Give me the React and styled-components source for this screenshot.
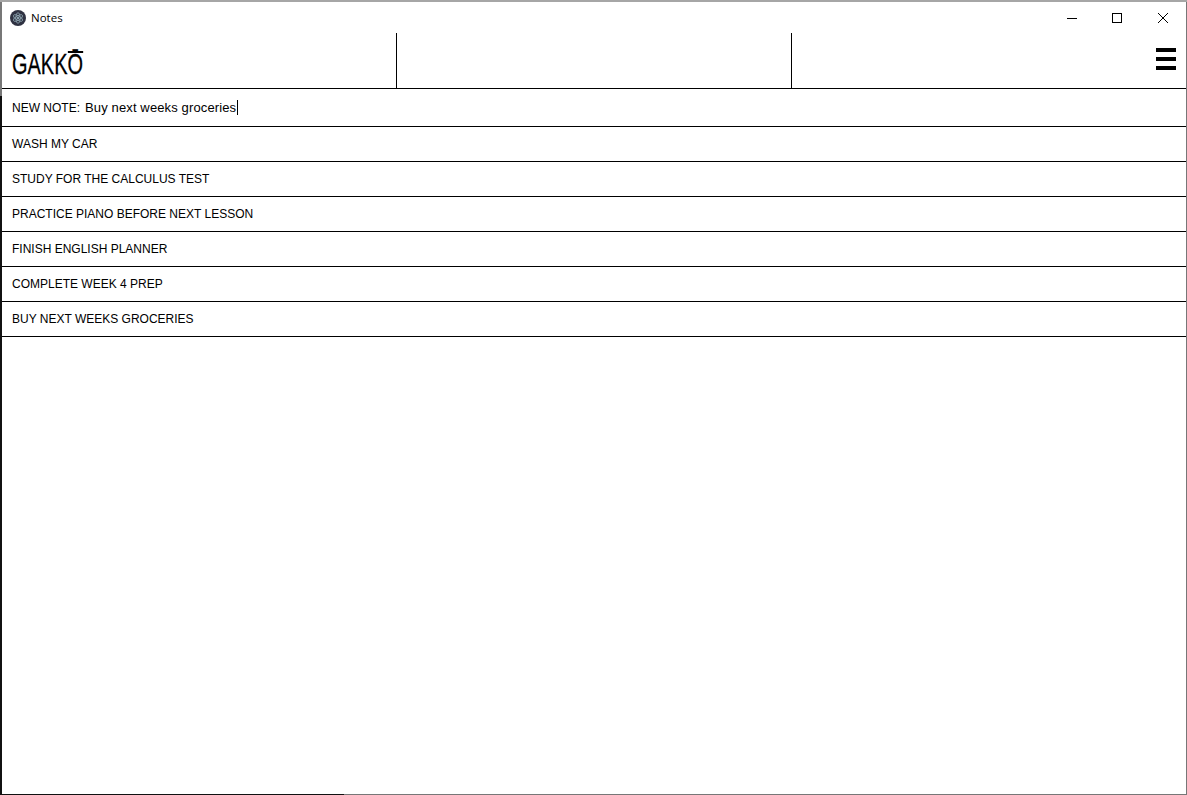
import React from "react";
import styled, { createGlobalStyle } from "styled-components";

const GlobalStyle = createGlobalStyle`
  html, body {
    margin: 0;
    padding: 0;
    background: #fff;
  }
  * {
    box-sizing: border-box;
  }
`;

// the window edge is gray, with darker parts where another window shows behind it
const Frame = styled.div`
  width: 1187px;
  height: 795px;
  padding: 2px 1px 1px 2px;
  background:
    linear-gradient(#a6a6a6, #a6a6a6) top left / 100% 2px no-repeat,
    linear-gradient(#111, #111) bottom left / 2px 699px no-repeat,
    linear-gradient(#111, #111) bottom left / 344px 1px no-repeat,
    #777;
`;

const Window = styled.div`
  height: 100%;
  display: flex;
  flex-direction: column;
  overflow: hidden;
  background: #fff;
  font-family: "Liberation Sans", Arial, sans-serif;
  color: #000;
`;

const TitleBar = styled.div`
  height: 31px;
  flex: none;
  display: flex;
  align-items: center;
  padding-left: 8px;
`;

const TitleText = styled.span`
  margin-left: 5px;
  font-family: "Open Sans", "Noto Sans", sans-serif;
  font-size: 11.5px;
  color: #000;
`;

const WindowControls = styled.div`
  margin-left: auto;
  margin-right: 1px;
  display: flex;
  height: 100%;
`;

const ControlButton = styled.div`
  width: 45px;
  display: flex;
  align-items: center;
  justify-content: center;

  &:last-child {
    margin-left: 1px;
  }
`;

const Header = styled.header`
  height: 56px;
  flex: none;
  display: grid;
  grid-template-columns: 395px 395px 1fr;
  border-bottom: 1px solid #000;
`;

const HeaderCell = styled.div`
  display: flex;
  align-items: flex-end;
  justify-content: ${(props) => (props.$end ? "flex-end" : "flex-start")};
  padding: ${(props) => (props.$end ? "0 10px 18px 0" : "0 0 8px 10px")};
  border-right: ${(props) => (props.$divider ? "1px solid #000" : "none")};
`;

const Logo = styled.span`
  display: block;
  font-size: 30px;
  line-height: 33px;
  -webkit-text-stroke: 0.3px #000;
  transform: scaleX(0.665);
  transform-origin: left center;
  white-space: nowrap;
`;

const LogoLastLetter = styled.span`
  position: relative;

  &::after {
    content: "";
    position: absolute;
    left: 1px;
    right: 0;
    top: 4px;
    height: 2px;
    background: #000;
  }
`;

const Burger = styled.div`
  width: 20px;
  display: flex;
  flex-direction: column;
  gap: 5px;
`;

const BurgerBar = styled.span`
  display: block;
  height: 4px;
  background: #000;
`;

const NoteList = styled.ul`
  list-style: none;
  margin: 0;
  padding: 0;
`;

const NewNoteRow = styled.form`
  height: 38px;
  margin: 0;
  display: flex;
  align-items: center;
  padding-left: 10px;
  border-bottom: 1px solid #000;
  font-size: 12px;
`;

const NewNoteLabel = styled.label``;

const NewNoteInput = styled.span`
  margin-left: 5px;
  font-size: 13px;
  letter-spacing: 0.01em;
  padding-right: 1px;
  border-right: 1px solid #000;
`;

const NoteRow = styled.li`
  height: 35px;
  display: flex;
  align-items: center;
  padding-left: 10px;
  border-bottom: 1px solid #000;
  font-size: 12px;
`;

const notes = [
  "WASH MY CAR",
  "STUDY FOR THE CALCULUS TEST",
  "PRACTICE PIANO BEFORE NEXT LESSON",
  "FINISH ENGLISH PLANNER",
  "COMPLETE WEEK 4 PREP",
  "BUY NEXT WEEKS GROCERIES",
];

function AppIcon() {
  return (
    <svg width="16" height="16" viewBox="0 0 16 16" fill="none">
      <circle cx="8" cy="8" r="8" fill="#2f3242" />
      <g stroke="#8fa6b2" strokeWidth="0.8">
        <ellipse cx="8" cy="8" rx="5.2" ry="2.1" transform="rotate(30 8 8)" />
        <ellipse cx="8" cy="8" rx="5.2" ry="2.1" transform="rotate(90 8 8)" />
        <ellipse cx="8" cy="8" rx="5.2" ry="2.1" transform="rotate(150 8 8)" />
      </g>
      <circle cx="8" cy="8" r="1" fill="#a9c4cf" />
    </svg>
  );
}

function App() {
  return (
    <>
      <GlobalStyle />
      <Frame>
        <Window>
          <TitleBar>
            <AppIcon />
            <TitleText>Notes</TitleText>
            <WindowControls>
              <ControlButton>
                <svg width="10" height="10" viewBox="0 0 10 10">
                  <path d="M0 5.5H10" stroke="#000" strokeWidth="1" />
                </svg>
              </ControlButton>
              <ControlButton>
                <svg width="10" height="10" viewBox="0 0 10 10" fill="none">
                  <rect x="0.5" y="0.5" width="9" height="9" stroke="#000" />
                </svg>
              </ControlButton>
              <ControlButton>
                <svg width="10" height="10" viewBox="0 0 10 10">
                  <path d="M0 0L10 10M10 0L0 10" stroke="#000" strokeWidth="1" />
                </svg>
              </ControlButton>
            </WindowControls>
          </TitleBar>
          <Header>
            <HeaderCell $divider>
              <Logo>
                GAKK<LogoLastLetter>Ō</LogoLastLetter>
              </Logo>
            </HeaderCell>
            <HeaderCell $divider />
            <HeaderCell $end>
              <Burger>
                <BurgerBar />
                <BurgerBar />
                <BurgerBar />
              </Burger>
            </HeaderCell>
          </Header>
          <NewNoteRow>
            <NewNoteLabel>NEW NOTE:</NewNoteLabel>
            <NewNoteInput>Buy next weeks groceries</NewNoteInput>
          </NewNoteRow>
          <NoteList>
            {notes.map((note) => (
              <NoteRow key={note}>{note}</NoteRow>
            ))}
          </NoteList>
        </Window>
      </Frame>
    </>
  );
}

export default App;
